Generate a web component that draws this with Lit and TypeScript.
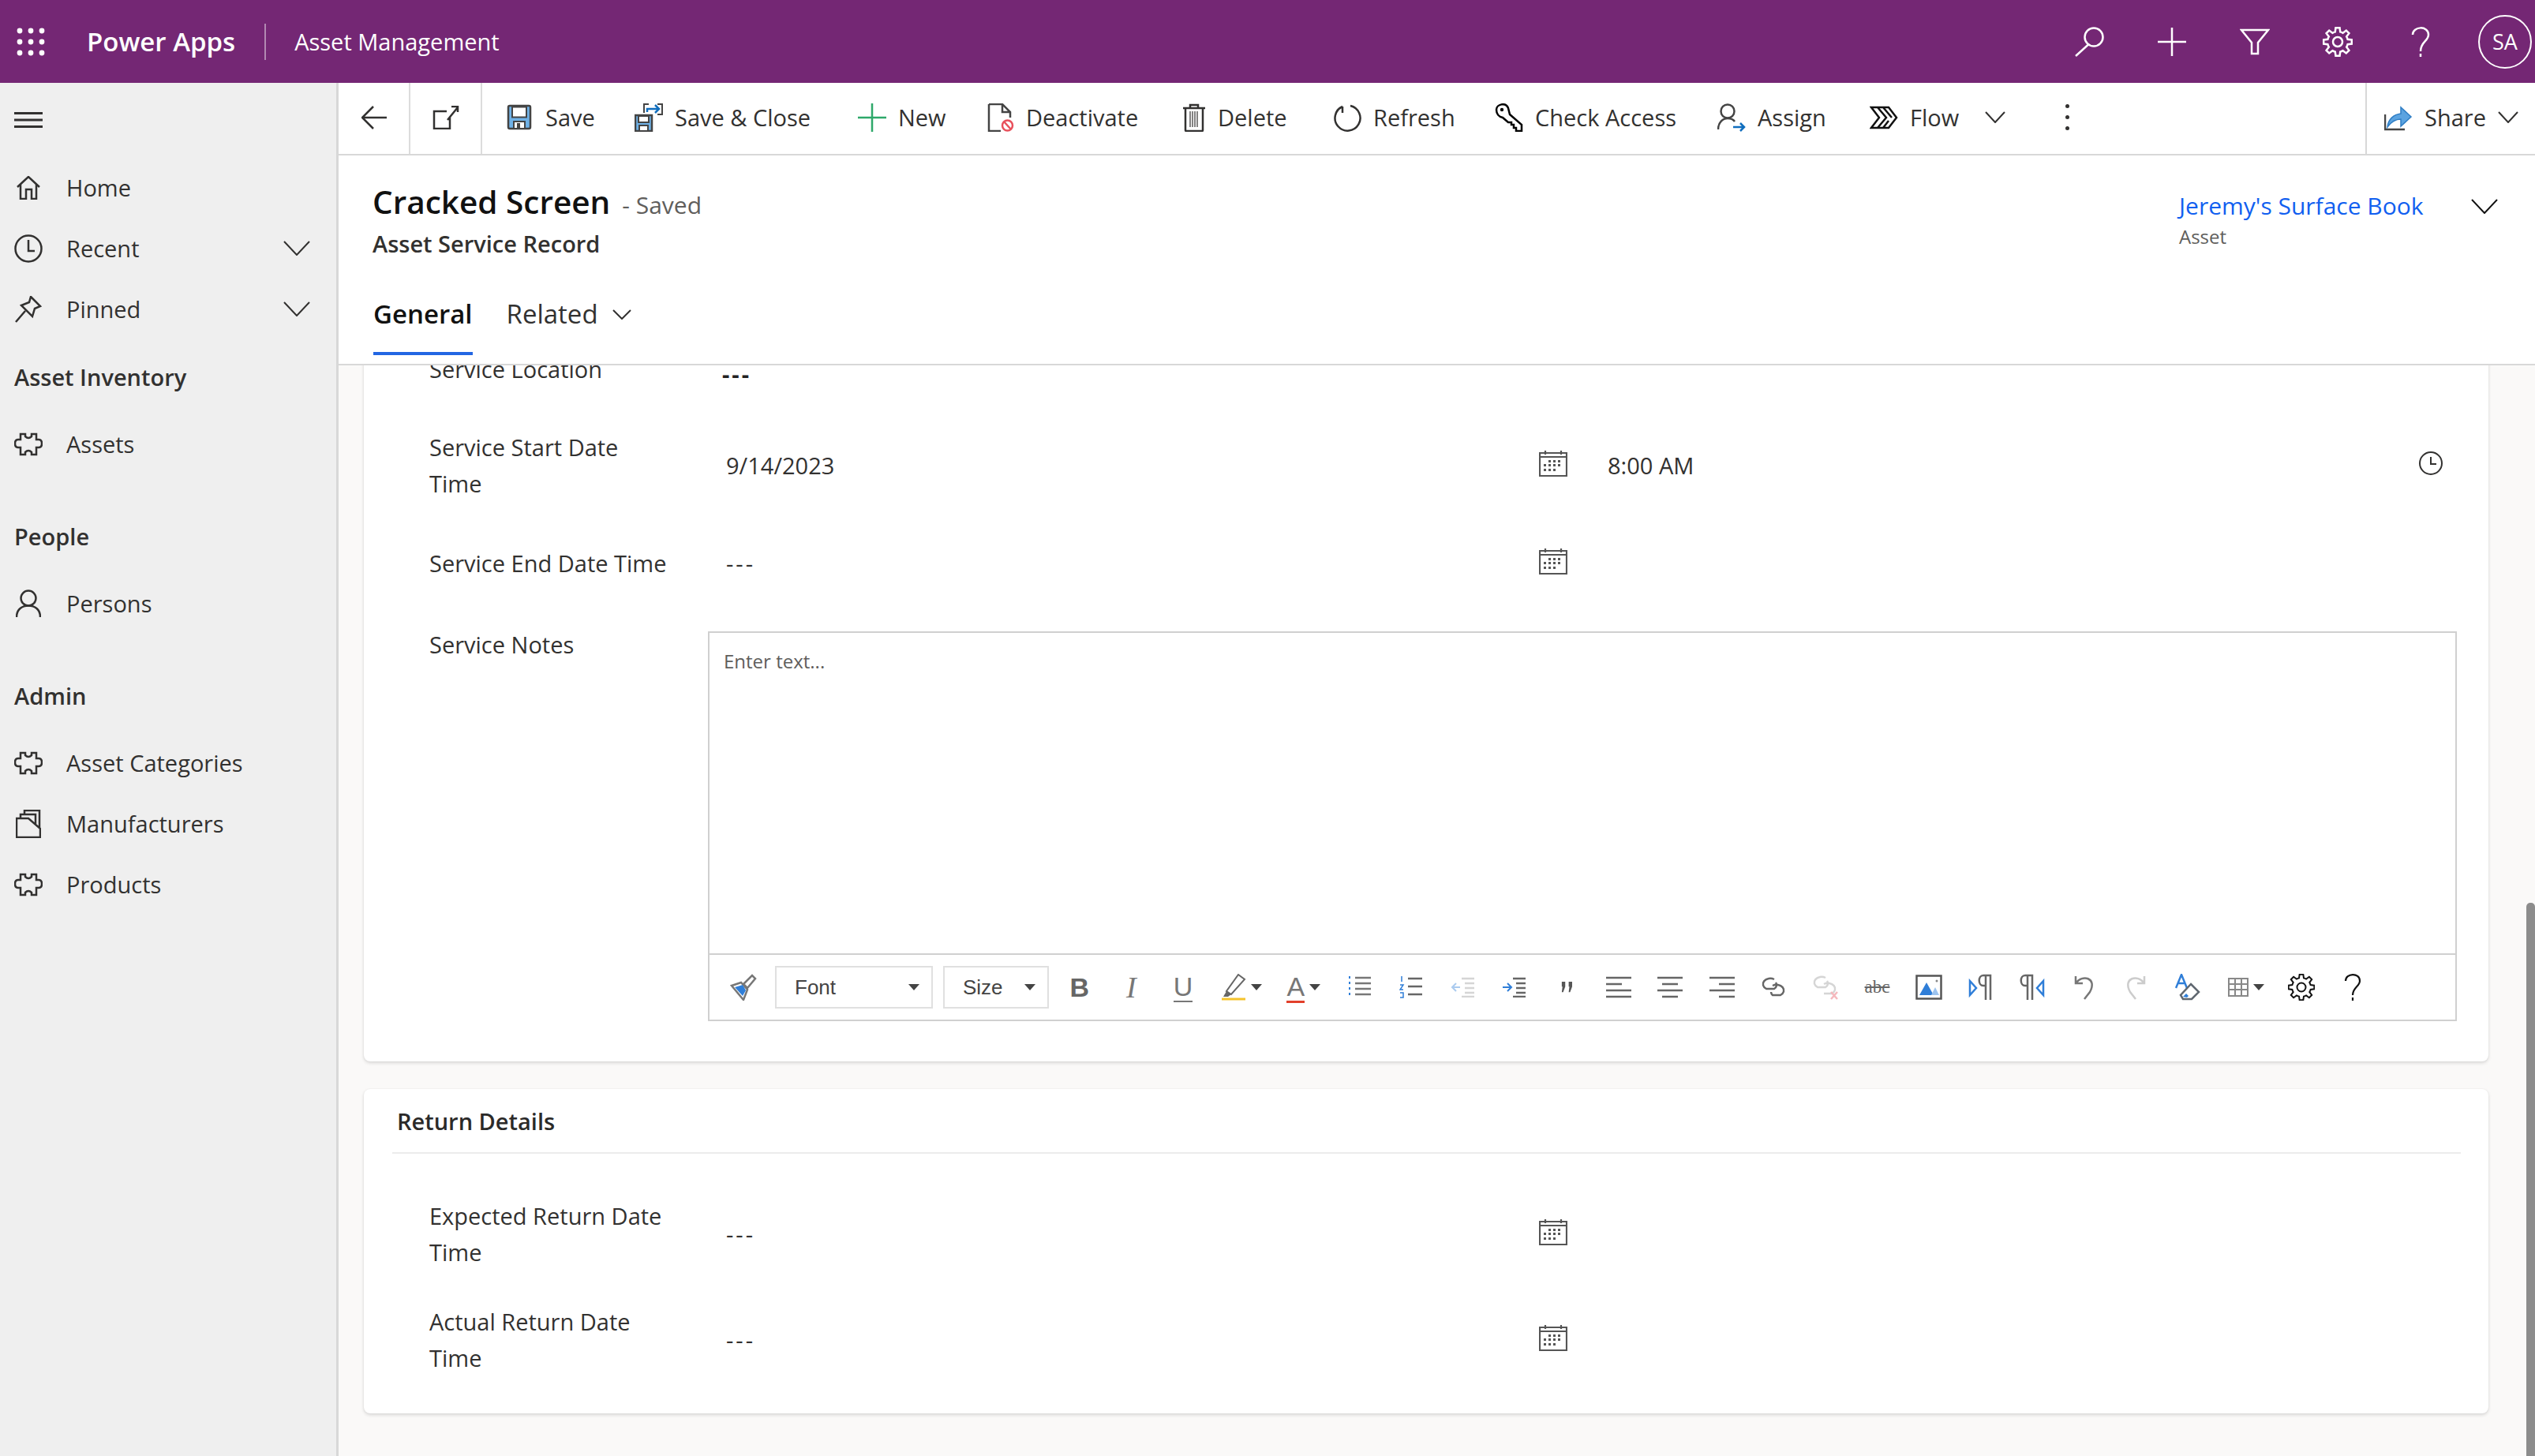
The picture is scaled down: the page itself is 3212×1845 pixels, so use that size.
import { LitElement, html, css } from 'lit';
import { customElement } from 'lit/decorators.js';

// gear outline, used in the top bar and in the editor toolbar
function gearPath(c: number, outer: number, inner: number, teeth = 8) {
  const pts: string[] = [];
  const step = (Math.PI * 2) / teeth;
  for (let i = 0; i < teeth; i++) {
    const a = i * step - Math.PI / 2;
    const at = (r: number, d: number) =>
      `${(c + r * Math.cos(a + d * step)).toFixed(2)} ${(c + r * Math.sin(a + d * step)).toFixed(2)}`;
    pts.push(`${i ? 'L' : 'M'}${at(inner, -0.32)}`, `L${at(outer, -0.18)}`, `L${at(outer, 0.18)}`, `L${at(inner, 0.32)}`);
    pts.push(`A${inner} ${inner} 0 0 1 ${at(inner, 0.68)}`);
  }
  return pts.join(' ') + ' Z';
}

const puzzle = html`<svg class="ln" width="36" height="30" viewBox="0 0 36 30"><path d="M8 2H14V5Q18 9 22 5V2H28V9H31Q35 9 35 14Q35 19 31 19H28V28H22V25Q18 21 14 25V28H8V19H5Q1 19 1 14Q1 9 5 9H8Z"/></svg>`;

const nav = {
  home: html`<svg class="ln" width="30" height="30" viewBox="0 0 30 30"><path d="M1 14L15 1L29 14M5 11V29H12V17H19V29H25V11"/></svg>`,
  clock: html`<svg class="ln" width="36" height="36" viewBox="0 0 36 36"><circle cx="18" cy="18" r="16.5"/><path d="M18 7V21H26"/></svg>`,
  pin: html`<svg class="ln" width="34" height="34" viewBox="0 0 34 34"><path d="M20 1L32 13L25 16L22 26L8 12L18 8ZM13 19L1 33"/></svg>`,
  person: html`<svg class="ln" width="32" height="36" viewBox="0 0 32 36"><circle cx="16" cy="11" r="9.5"/><path d="M1 35C1 25 8 20.5 16 20.5S31 25 31 35"/></svg>`,
  stack: html`<svg class="ln" width="32" height="36" viewBox="0 0 32 36"><path d="M1 11H16L31 24V35H1ZM6 11V6H25V19M11 6V1H30V24"/></svg>`,
};

const chevron = (w: number, h: number) =>
  html`<svg class="ln thin" width=${w} height=${h} viewBox="0 0 ${w} ${h}"><path d="M1 1L${w / 2} ${h - 1}L${w - 1} 1"/></svg>`;

const cmd = {
  back: html`<svg class="ln" width="32" height="30" viewBox="0 0 32 30"><path d="M32 15H2M15 1L1 15L15 29"/></svg>`,
  popout: html`<svg class="ln" width="34" height="30" viewBox="0 0 34 30"><path d="M18 7H2V29H22V14M19 18L32 2M24 1H32V8"/></svg>`,
  save: html`<svg width="36" height="36" viewBox="0 0 36 36"><rect x="4" y="3" width="28" height="29" rx="2" fill="#6fb1e6" stroke="#444" stroke-width="2.5"/><rect x="9" y="4.5" width="18" height="13" fill="#fff" stroke="#444" stroke-width="2"/><rect x="11" y="23" width="14" height="9" fill="#fff" stroke="#444" stroke-width="2"/><rect x="15" y="25" width="4" height="7" fill="#444"/></svg>`,
  saveClose: html`<svg width="36" height="36" viewBox="0 0 36 36"><rect x="1" y="15" width="21" height="20" fill="#6fb1e6" stroke="#444" stroke-width="2.5"/><rect x="5" y="16" width="13" height="8" fill="#fff" stroke="#444" stroke-width="2"/><rect x="6" y="28" width="11" height="7" fill="#fff" stroke="#444" stroke-width="2"/><path d="M12 12V1H18M29 1H35V14H29" fill="none" stroke="#444" stroke-width="2"/><path d="M16 11V7H31M26 2L31 7L26 12" fill="none" stroke="#106ebe" stroke-width="2.5"/></svg>`,
  plus: html`<svg width="36" height="36" viewBox="0 0 36 36"><path d="M18 0V36M0 18H36" fill="none" stroke="#2ea86a" stroke-width="2.5"/></svg>`,
  deactivate: html`<svg width="34" height="36" viewBox="0 0 34 36"><path d="M2 1H19L29 11V18M19 1V11H29M2 1V35H17" fill="none" stroke="#444" stroke-width="2.5"/><circle cx="25.5" cy="28" r="6.5" fill="#fff" stroke="#e8505b" stroke-width="2.5"/><path d="M21 23L30 33" stroke="#e8505b" stroke-width="2.5"/></svg>`,
  trash: html`<svg class="ln" width="30" height="36" viewBox="0 0 30 36"><path d="M1 6H29M10 6V2H20V6M4 6V34Q4 35 5 35H25Q26 35 26 34V6"/><path class="hair" d="M10 10V30M13 10V30M16 10V30M19 10V30"/></svg>`,
  refresh: html`<svg class="ln" width="36" height="36" viewBox="0 0 36 36"><path d="M22 3A16 16 0 1 1 12 4M12 4V12M12 4L6 8"/></svg>`,
  key: html`<svg width="36" height="36" viewBox="0 0 36 36"><path d="M2 8C2 1 14 -2 17 6L19 14L34 27V35H27V31H24V27H21V24H17L10 18C5 17 2 13 2 8Z" fill="none" stroke="#000" stroke-width="2.5"/><circle cx="9" cy="8" r="2.2" fill="#000"/></svg>`,
  assign: html`<svg width="36" height="36" viewBox="0 0 36 36"><g fill="none" stroke="#444" stroke-width="2.5"><circle cx="13" cy="10" r="8.5"/><path d="M1 33C1 24 7 19 13 19C17 19 20 20 22 23"/></g><path d="M20 30H34M29 25L34 30L29 35" fill="none" stroke="#106ebe" stroke-width="2.5"/></svg>`,
  flow: html`<svg width="36" height="30" viewBox="0 0 36 30"><path d="M2 2H24L34 15L24 28H2L12 15ZM10 2L21 15L10 28M17 2L28 15M17 28L24 19" fill="none" stroke="#111" stroke-width="2.5"/></svg>`,
  share: html`<svg width="36" height="36" viewBox="0 0 36 36"><path d="M1 14V33H26" fill="none" stroke="#444" stroke-width="2.5"/><path d="M4 30C5 20 12 14 21 13V5L34 17L21 29V20C14 20 9 23 4 30Z" fill="#5ba3e0" stroke="#2f7ec5" stroke-width="1.5"/></svg>`,
};

const hdr = {
  waffle: html`<svg width="36" height="36" viewBox="0 0 36 36" fill="#fff"><circle cx="4" cy="4" r="3.4"/><circle cx="18" cy="4" r="3.4"/><circle cx="32" cy="4" r="3.4"/><circle cx="4" cy="18" r="3.4"/><circle cx="18" cy="18" r="3.4"/><circle cx="32" cy="18" r="3.4"/><circle cx="4" cy="32" r="3.4"/><circle cx="18" cy="32" r="3.4"/><circle cx="32" cy="32" r="3.4"/></svg>`,
  search: html`<svg class="ln" width="38" height="38" viewBox="0 0 38 38"><circle cx="25" cy="13" r="11.5"/><path d="M18 22.5L2 37"/></svg>`,
  plus: html`<svg class="ln" width="36" height="36" viewBox="0 0 36 36"><path d="M18 0V36M0 18H36"/></svg>`,
  filter: html`<svg class="ln" width="38" height="34" viewBox="0 0 38 34"><path d="M2 2H36L23 18V32H15V18Z"/></svg>`,
  gear: html`<svg class="ln" width="38" height="38" viewBox="0 0 38 38"><path d=${gearPath(19, 18, 13)}/><circle cx="19" cy="19" r="6"/></svg>`,
  help: html`<svg class="ln" width="24" height="38" viewBox="0 0 24 38"><path d="M2 10C2 -1 22 -2 22 10C22 18 12 19 12 31"/><path d="M12 34V38"/></svg>`,
};

const calendar = html`<svg class="cal" width="36" height="34" viewBox="0 0 36 34"><path class="box" d="M1 4H35V33H1ZM1 9H35M8 1V6M28 1V6"/><g class="dots"><rect x="12" y="13" width="3" height="3"/><rect x="18" y="13" width="3" height="3"/><rect x="24" y="13" width="3" height="3"/><rect x="6" y="18" width="3" height="3"/><rect x="12" y="18" width="3" height="3"/><rect x="18" y="18" width="3" height="3"/><rect x="24" y="18" width="3" height="3"/><rect x="6" y="24" width="3" height="3"/><rect x="12" y="24" width="3" height="3"/><rect x="18" y="24" width="3" height="3"/></g></svg>`;

const caret = html`<svg class="caret" width="14" height="8" viewBox="0 0 14 8"><path d="M0 0H14L7 8Z"/></svg>`;

const rte = {
  brush: html`<svg width="34" height="34" viewBox="0 0 34 34"><path d="M2 15L14 11L22 20L17 33Z" fill="#fff" stroke="#777" stroke-width="2.5"/><path d="M6 17L16 14L20 21L16 28Z" fill="#2f7ed8"/><path d="M17 13L28 2L32 6L22 18Z" fill="#fff" stroke="#777" stroke-width="2.5"/></svg>`,
  marker: html`<svg width="32" height="34" viewBox="0 0 32 34"><path d="M22 1L30 7L13 26L7 22Z" fill="#fff" stroke="#666" stroke-width="2"/><path d="M7 22L13 26L9 29H3Z" fill="#666"/><path d="M1 32H31" stroke="#f5c32c" stroke-width="3"/></svg>`,
  bullets: html`<svg width="30" height="30" viewBox="0 0 30 30"><path d="M9 3H29M9 10H29M9 17H29M9 24H29" stroke="#777" stroke-width="2.5"/><path d="M2 1V4M2 8V11M2 15V18M2 22V25" stroke="#2f7ed8" stroke-width="2"/></svg>`,
  numbers: html`<svg width="30" height="30" viewBox="0 0 30 30"><path d="M11 4H29M11 14H29M11 24H29" stroke="#666" stroke-width="2.5"/><path d="M3 1V8M1 12H5L1 18H5M1 22H5V28H1" fill="none" stroke="#2f7ed8" stroke-width="1.5"/></svg>`,
  outdent: html`<svg class="off" width="32" height="26" viewBox="0 0 32 26"><path d="M14 2H30M18 8H30M18 14H30M18 20H30M14 25H30" stroke="#999" stroke-width="2.5"/><path d="M12 13H2M7 8L2 13L7 18" fill="none" stroke="#2f7ed8" stroke-width="2"/></svg>`,
  indent: html`<svg width="32" height="26" viewBox="0 0 32 26"><path d="M14 2H30M18 8H30M18 14H30M18 20H30M14 25H30" stroke="#666" stroke-width="2.5"/><path d="M1 13H12M7 8L12 13L7 18" fill="none" stroke="#2f7ed8" stroke-width="2"/></svg>`,
  quote: html`<svg width="18" height="14" viewBox="0 0 20 16" fill="#555"><path d="M3 0H8V7L5 15H3L4 7H3ZM13 0H18V7L15 15H13L14 7H13Z"/></svg>`,
  left: html`<svg width="32" height="28" viewBox="0 0 32 28"><path d="M0 2H32M0 10H20M0 18H32M0 26H32" stroke="#666" stroke-width="2.5"/></svg>`,
  center: html`<svg width="32" height="28" viewBox="0 0 32 28"><path d="M0 2H32M6 10H26M0 18H32M6 26H26" stroke="#666" stroke-width="2.5"/></svg>`,
  right: html`<svg width="32" height="28" viewBox="0 0 32 28"><path d="M0 2H32M12 10H32M0 18H32M12 26H32" stroke="#666" stroke-width="2.5"/></svg>`,
  link: html`<svg width="34" height="28" viewBox="0 0 34 28" fill="none" stroke="#666" stroke-width="2.5"><path d="M18 4A9 7 0 1 0 8 16H18A7 6 0 0 0 20 8"/><path d="M16 12A9 7 0 1 1 26 24H16A7 6 0 0 1 14 20"/></svg>`,
  unlink: html`<svg class="off" width="36" height="32" viewBox="0 0 36 32" fill="none" stroke="#999" stroke-width="2.5"><path d="M18 4A9 7 0 1 0 8 16H18A7 6 0 0 0 20 8"/><path d="M16 12A9 7 0 1 1 26 24H16"/><path d="M25 22L33 31M33 22L25 31" stroke="#e8505b"/></svg>`,
  image: html`<svg width="34" height="32" viewBox="0 0 34 32"><rect x="1.5" y="1.5" width="31" height="29" fill="#fff" stroke="#555" stroke-width="2.5"/><path d="M5 26L14 10L23 26Z" fill="#2f7ed8"/><path d="M20 26L25 16L30 26Z" fill="#9cc3ee"/><circle cx="27" cy="8" r="1.5" fill="#888"/></svg>`,
  ltr: html`<svg width="32" height="34" viewBox="0 0 32 34"><path d="M22 33V2M28 33V2H19C12 2 12 15 19 15H22" fill="none" stroke="#666" stroke-width="2.5"/><path d="M2 9L10 18L2 27Z" fill="none" stroke="#2f7ed8" stroke-width="2.5"/></svg>`,
  rtl: html`<svg width="32" height="34" viewBox="0 0 32 34"><path d="M10 33V2M16 33V2H7C0 2 0 15 7 15H10" fill="none" stroke="#666" stroke-width="2.5"/><path d="M30 9L22 18L30 27Z" fill="none" stroke="#2f7ed8" stroke-width="2.5"/></svg>`,
  undo: html`<svg width="26" height="32" viewBox="0 0 26 32" fill="none" stroke="#777" stroke-width="2.5"><path d="M2 2V11H11M2 11C10 -1 30 4 20 22L13 31"/></svg>`,
  redo: html`<svg width="26" height="32" viewBox="0 0 26 32" fill="none" stroke="#ccc" stroke-width="2.5"><path d="M24 2V11H15M24 11C16 -1 -4 4 6 22L13 31"/></svg>`,
  clear: html`<svg width="32" height="34" viewBox="0 0 32 34"><path d="M1 18L8 1L15 18M4 12H12" fill="none" stroke="#2f7ed8" stroke-width="2.5"/><path d="M20 13L30 23L21 32H10L7 27Z" fill="#fff" stroke="#606870" stroke-width="2.5"/><path d="M10 29L14 25L17 28L15 30Z" fill="#2f7ed8"/></svg>`,
  table: html`<svg width="26" height="24" viewBox="0 0 26 24"><path d="M1 1H25V23H1ZM1 8H25M1 15H25M9 1V23M17 1V23" fill="none" stroke="#888" stroke-width="2"/></svg>`,
  gear: html`<svg width="34" height="34" viewBox="0 0 34 34" fill="none" stroke="#111" stroke-width="2"><path d=${gearPath(17, 16.5, 12)}/><circle cx="17" cy="17" r="5.5"/></svg>`,
  help: html`<svg width="22" height="34" viewBox="0 0 22 34" fill="none" stroke="#111" stroke-width="2.2"><path d="M2 9C2 -1 20 -2 20 9C20 16 11 17 11 27M11 30V34"/></svg>`,
};

const navGroups = [
  { title: 'Asset Inventory', items: [{ label: 'Assets', icon: puzzle }] },
  { title: 'People', items: [{ label: 'Persons', icon: nav.person }] },
  {
    title: 'Admin',
    items: [
      { label: 'Asset Categories', icon: puzzle },
      { label: 'Manufacturers', icon: nav.stack },
      { label: 'Products', icon: puzzle },
    ],
  },
];

const commands = [
  { label: 'Save', icon: cmd.save },
  { label: 'Save & Close', icon: cmd.saveClose },
  { label: 'New', icon: cmd.plus },
  { label: 'Deactivate', icon: cmd.deactivate },
  { label: 'Delete', icon: cmd.trash },
  { label: 'Refresh', icon: cmd.refresh },
  { label: 'Check Access', icon: cmd.key },
  { label: 'Assign', icon: cmd.assign },
  { label: 'Flow', icon: cmd.flow },
];

const toolsAfterColor = [
  rte.bullets, rte.numbers, rte.outdent, rte.indent, rte.quote, rte.left, rte.center, rte.right,
  rte.link, rte.unlink, html`<span class="strike">abc</span>`, rte.image, rte.ltr, rte.rtl, rte.undo, rte.redo, rte.clear,
];

@customElement('app-root')
export class AppRoot extends LitElement {
  static styles = css`
    :host {
      display: flex;
      flex-direction: column;
      width: 100vw;
      height: 100vh;
      overflow: hidden;
      font-family: 'Open Sans', 'Noto Sans', sans-serif;
      font-size: 29px;
      color: #323130;
      background: #fff;
    }
    svg { display: block; flex: none; }
    .ln { fill: none; stroke: currentColor; stroke-width: 2.5; }
    .ln.thin { stroke-width: 2; }
    .ln .hair { stroke-width: 1.2; }

    /* top bar */
    .topbar {
      flex: none;
      height: 105px;
      display: flex;
      align-items: center;
      background: #742774;
      color: #fff;
    }
    .waffle { margin-left: 21px; width: 36px; }
    .brand { margin-left: 53px; font-size: 33px; font-weight: 600; padding-right: 37px; border-right: 2px solid rgba(255, 255, 255, 0.45); line-height: 46px; }
    .app { margin-left: 36px; font-size: 29px; }
    .top-actions { margin-left: auto; display: flex; align-items: center; padding-right: 4px; }
    .top-btn { width: 105px; height: 105px; display: flex; align-items: center; justify-content: center; }
    .avatar {
      width: 68px;
      height: 68px;
      margin-left: 21px;
      box-sizing: border-box;
      border: 2.5px solid #fff;
      border-radius: 50%;
      display: flex;
      align-items: center;
      justify-content: center;
      font-size: 27px;
    }

    .body { flex: 1; min-height: 0; display: flex; }

    /* sidebar */
    .sidebar {
      flex: none;
      width: 426px;
      border-right: 3px solid #d8d8d8;
      background: #efefef;
    }
    .burger { height: 94px; display: flex; align-items: center; padding-left: 18px; }
    .burger svg { stroke-width: 3; }
    .nav-item { height: 77px; display: flex; align-items: center; padding: 0 33px 0 18px; }
    .nav-icon { width: 36px; display: flex; justify-content: center; margin-right: 30px; }
    .nav-item .chev { margin-left: auto; }
    .nav-title { height: 78px; margin: 39px 0 8px; padding-left: 18px; display: flex; align-items: center; font-weight: 600; }
    .nav-title.first { margin-top: 8px; }

    .main { flex: 1; min-width: 0; display: flex; flex-direction: column; position: relative; }

    /* command bar */
    .cmdbar { flex: none; height: 90px; display: flex; border-bottom: 2px solid #d8d8d8; }
    .cmd-nav { width: 89px; box-sizing: content-box; display: flex; align-items: center; justify-content: center; border-right: 2px solid #dcdcdc; }
    .cmd-nav svg { margin-top: -3px; }
    .cmd-grid {
      margin-left: 29px;
      padding-bottom: 3px;
      display: grid;
      grid-template-columns: 164px 283px 164px 247px 191px 205px 282px 193px 141px 36px 146px;
      align-items: center;
    }
    .cmd { display: flex; align-items: center; gap: 15px; white-space: nowrap; }
    .cmd-chev { display: flex; justify-content: center; }
    .cmd-dots { display: flex; flex-direction: column; align-items: center; gap: 9px; }
    .cmd-dots span { width: 5px; height: 5px; border-radius: 50%; background: #323130; }
    .cmd-share {
      margin-left: auto;
      width: 215px;
      box-sizing: border-box;
      border-left: 2px solid #d8d8d8;
      padding: 0 21px 3px 22px;
    }
    .cmd-share .chev { margin-left: auto; }

    /* record header */
    .record { flex: none; height: 266px; box-sizing: border-box; border-bottom: 2px solid #d8d8d8; display: flex; flex-direction: column; }
    .record-top { display: flex; padding: 31px 0 0 43px; }
    .title-line { display: flex; align-items: baseline; height: 56px; }
    .title { font-size: 40.5px; font-weight: 600; color: #111; line-height: 56px; }
    .saved { margin-left: 15px; color: #605e5c; font-size: 30px; }
    .entity { margin-top: 7px; font-weight: 600; line-height: 36px; }
    .lookup { margin-left: auto; width: 451px; display: flex; padding-top: 15px; }
    .lookup-main { flex: 1; }
    .lookup-link { color: #115ff0; font-weight: 500; font-size: 30px; line-height: 36px; }
    .lookup-type { margin-top: 6px; font-size: 24px; line-height: 30px; color: #605e5c; }
    .lookup .chev { margin: 9px 47px 0 0; color: #111; }
    .tabs { margin-top: auto; display: flex; padding: 0 0 11px 44px; }
    .tab { height: 70px; display: flex; gap: 18px; line-height: 44px; font-size: 33px; }
    .tab.on { font-weight: 600; color: #111; border-bottom: 4px solid #2266e3; }
    .tab.rel { margin-left: 43px; }
    .tab svg { margin-top: 16px; }

    /* scrolled form */
    .scroll { flex: 1; min-height: 0; overflow: hidden; background: #faf9f8; }
    .scroll-inner { margin: -60px 59px 0 32px; display: flex; flex-direction: column; gap: 35px; }
    .card { background: #fff; border-radius: 8px; box-shadow: 0 2px 4px rgba(0, 0, 0, 0.14), 0 0 2px rgba(0, 0, 0, 0.06); }
    .card.first { padding: 42px 40px 51px 83px; }
    .card.second { padding: 0 35px 47px 36px; }
    .row { display: grid; grid-template-columns: 353px 1fr; align-items: center; margin-bottom: 55px; line-height: 46px; }
    .row.loc { margin-bottom: 53px; }
    .row.notes { align-items: start; margin-bottom: 0; padding-top: 2px; }
    .row-label { white-space: nowrap; }
    .fields { display: grid; grid-template-columns: 1098px 1fr; gap: 19px; align-items: center; }
    .field { display: flex; align-items: center; justify-content: space-between; padding-left: 23px; }
    .field.date { padding-right: 9px; }
    .field.time { padding: 0 18px 0 23px; }
    .field svg { margin-top: -7px; }
    .dash { letter-spacing: 3px; }
    .loc-value { font-weight: 700; margin: 6px 0 -6px; padding-left: 18px; line-height: 46px; color: #222; letter-spacing: 3px; }

    .editor { margin-top: 6px; height: 494px; box-sizing: border-box; border: 2px solid #d0d0d0; display: flex; flex-direction: column; }
    .editor-text { flex: 1; padding: 16px 18px; font-size: 24px; line-height: 40px; color: #605e5c; }
    .rte { flex: none; height: 84px; box-sizing: border-box; border-top: 2px solid #d0d0d0; display: flex; align-items: center; padding-left: 10px; font-family: 'Liberation Sans', Arial, sans-serif; color: #666; }
    .t { flex: none; width: 65.6px; height: 60px; box-sizing: border-box; display: flex; align-items: center; justify-content: center; gap: 6px; }
    .t.w { width: 80px; padding-left: 4px; }
    .t.m { width: 78px; padding-left: 4px; }
    .t.first { width: 66px; margin-right: 7px; }
    .off { opacity: 0.4; }
    .select { flex: none; height: 54px; box-sizing: border-box; border: 2px solid #e0e0e0; display: flex; align-items: center; justify-content: space-between; font-size: 26px; color: #444; }
    .select.font { width: 200px; padding: 0 15px 0 23px; margin-right: 13px; }
    .select.size { width: 134px; padding: 0 15px 0 23px; margin-right: 6px; }
    .caret { fill: #444; }
    .b { font-size: 34px; font-weight: 700; }
    .i { font-family: 'Liberation Serif', serif; font-size: 38px; font-style: italic; color: #777; }
    .u { font-size: 34px; line-height: 36px; border-bottom: 2px solid #777; color: #777; }
    .a { font-size: 34px; line-height: 36px; border-bottom: 3px solid #e2402b; color: #777; }
    .strike { font-size: 23px; text-decoration: line-through; color: #666; font-family: 'Liberation Serif', serif; }

    .section-head { height: 80px; border-bottom: 2px solid #ececec; display: flex; align-items: center; padding-left: 6px; font-weight: 600; color: #2b2a29; }
    .rows { padding: 56px 0 0 47px; }
    .rows .row { margin-bottom: 42px; }
    .rows .row:last-child { margin-bottom: 0; }
    .rows .fields { grid-template-columns: 1098px; }

    .cal .box { fill: none; stroke: #555; stroke-width: 2.2; }
    .cal .dots { fill: #555; }

    .thumb {
      position: absolute;
      right: 0;
      bottom: 0;
      width: 11px;
      height: 701px;
      border-radius: 5px 5px 0 0;
      background: #8c8c8c;
    }
  `;

  private renderRow(lines: string[], value: string) {
    return html`<div class="row">
      <div class="row-label">${lines.map((l, i) => html`${i ? html`<br />` : ''}${l}`)}</div>
      <div class="fields">
        <div class="field date"><span class="dash">${value}</span>${calendar}</div>
      </div>
    </div>`;
  }

  render() {
    return html`
      <div class="topbar">
        <div class="waffle">${hdr.waffle}</div>
        <div class="brand">Power Apps</div>
        <div class="app">Asset Management</div>
        <div class="top-actions">
          <div class="top-btn">${hdr.search}</div>
          <div class="top-btn">${hdr.plus}</div>
          <div class="top-btn">${hdr.filter}</div>
          <div class="top-btn">${hdr.gear}</div>
          <div class="top-btn">${hdr.help}</div>
          <div class="avatar">SA</div>
        </div>
      </div>
      <div class="body">
        <nav class="sidebar">
          <div class="burger">
            <svg class="ln" width="36" height="20" viewBox="0 0 36 20"><path d="M0 1.5H36M0 10H36M0 18.5H36" /></svg>
          </div>
          <div class="nav-item"><span class="nav-icon">${nav.home}</span>Home</div>
          <div class="nav-item"><span class="nav-icon">${nav.clock}</span>Recent<span class="chev">${chevron(34, 19)}</span></div>
          <div class="nav-item"><span class="nav-icon">${nav.pin}</span>Pinned<span class="chev">${chevron(34, 19)}</span></div>
          ${navGroups.map(
            (g, i) => html`<div class="nav-title ${i === 0 ? 'first' : ''}">${g.title}</div>
              ${g.items.map((it) => html`<div class="nav-item"><span class="nav-icon">${it.icon}</span>${it.label}</div>`)}`
          )}
        </nav>
        <div class="main">
          <div class="cmdbar">
            <div class="cmd-nav">${cmd.back}</div>
            <div class="cmd-nav">${cmd.popout}</div>
            <div class="cmd-grid">
              ${commands.map((c) => html`<div class="cmd">${c.icon}<span>${c.label}</span></div>`)}
              <div class="cmd-chev">${chevron(26, 15)}</div>
              <div class="cmd-dots"><span></span><span></span><span></span></div>
            </div>
            <div class="cmd cmd-share">${cmd.share}<span>Share</span><span class="chev">${chevron(26, 15)}</span></div>
          </div>
          <div class="record">
            <div class="record-top">
              <div>
                <div class="title-line"><span class="title">Cracked Screen</span><span class="saved">- Saved</span></div>
                <div class="entity">Asset Service Record</div>
              </div>
              <div class="lookup">
                <div class="lookup-main">
                  <div class="lookup-link">Jeremy's Surface Book</div>
                  <div class="lookup-type">Asset</div>
                </div>
                <span class="chev">${chevron(34, 19)}</span>
              </div>
            </div>
            <div class="tabs">
              <div class="tab on">General</div>
              <div class="tab rel">Related ${chevron(24, 13)}</div>
            </div>
          </div>
          <div class="scroll">
            <div class="scroll-inner">
              <section class="card first">
                <div class="row loc">
                  <div class="row-label">Service Location</div>
                  <div class="loc-value">---</div>
                </div>
                <div class="row">
                  <div class="row-label">Service Start Date<br />Time</div>
                  <div class="fields">
                    <div class="field date"><span>9/14/2023</span>${calendar}</div>
                    <div class="field time">
                      <span>8:00 AM</span>
                      <svg class="ln thin" width="30" height="30" viewBox="0 0 30 30"><circle cx="15" cy="15" r="14" /><path d="M15 7V16H22" /></svg>
                    </div>
                  </div>
                </div>
                ${this.renderRow(['Service End Date Time'], '---')}
                <div class="row notes">
                  <div class="row-label">Service Notes</div>
                  <div class="editor">
                    <div class="editor-text">Enter text...</div>
                    <div class="rte">
                      <div class="t first">${rte.brush}</div>
                      <div class="select font">Font ${caret}</div>
                      <div class="select size">Size ${caret}</div>
                      <div class="t"><span class="b">B</span></div>
                      <div class="t"><span class="i">I</span></div>
                      <div class="t"><span class="u">U</span></div>
                      <div class="t m">${rte.marker}${caret}</div>
                      <div class="t w"><span class="a">A</span>${caret}</div>
                      ${toolsAfterColor.map((icon) => html`<div class="t">${icon}</div>`)}
                      <div class="t m">${rte.table}${caret}</div>
                      <div class="t">${rte.gear}</div>
                      <div class="t">${rte.help}</div>
                    </div>
                  </div>
                </div>
              </section>
              <section class="card second">
                <div class="section-head">Return Details</div>
                <div class="rows">
                  ${this.renderRow(['Expected Return Date', 'Time'], '---')}
                  ${this.renderRow(['Actual Return Date', 'Time'], '---')}
                </div>
              </section>
            </div>
          </div>
          <div class="thumb"></div>
        </div>
      </div>
    `;
  }
}
